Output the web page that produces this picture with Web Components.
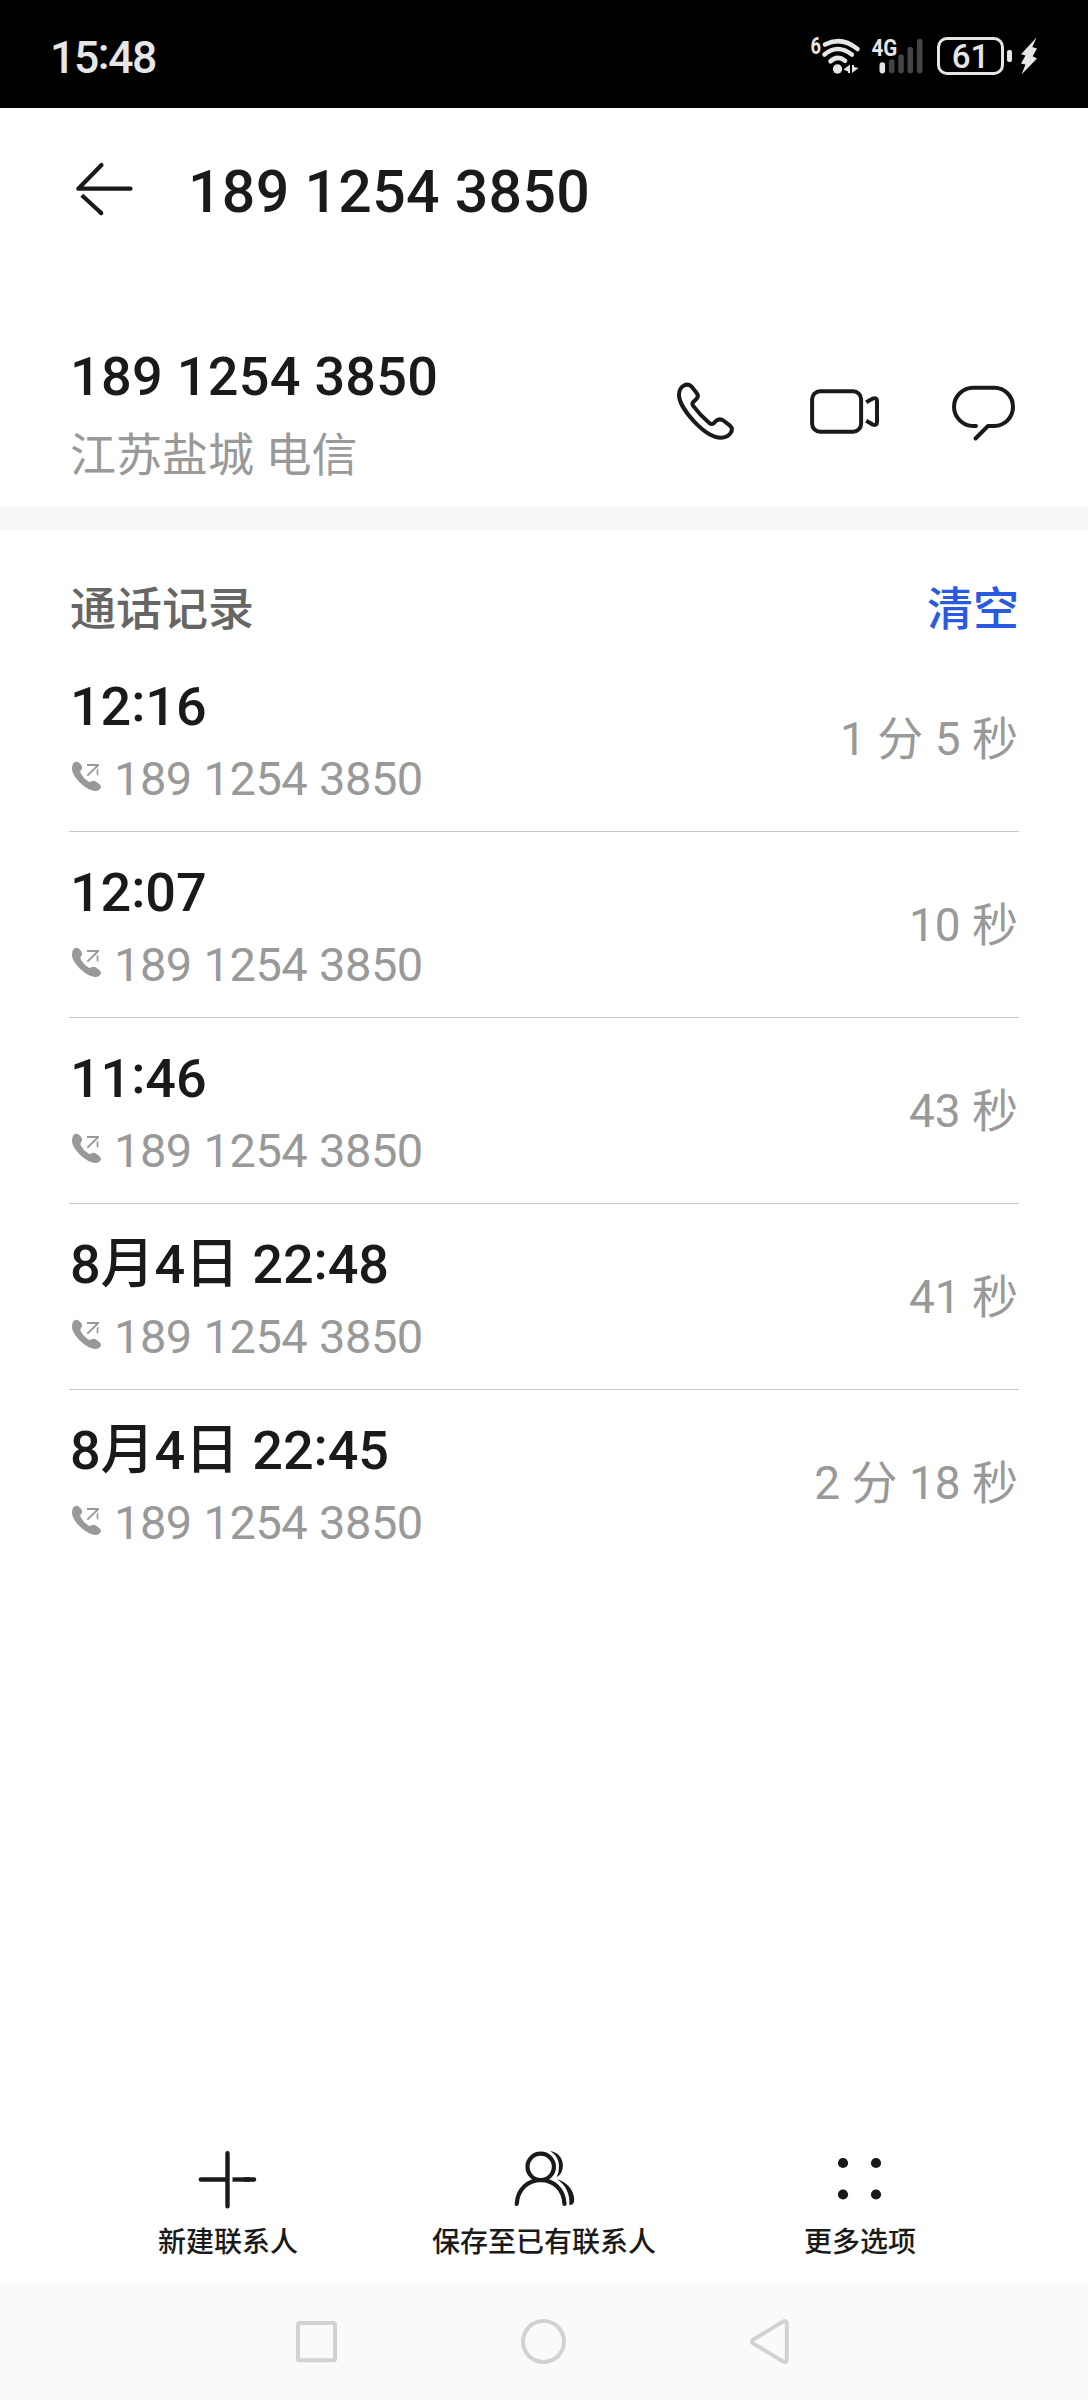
<!DOCTYPE html>
<html lang="zh-CN">
<head>
<meta charset="utf-8">
<title>通话记录</title>
<style>
body{margin:0;background:#fff;font-family:Roboto,"Noto Sans CJK SC",sans-serif;color:#1a1a1a}
</style>
</head>
<body>
<contact-page></contact-page>
<script>
const define=(name,css,html)=>customElements.define(name,class extends HTMLElement{
  constructor(){super();this.attachShadow({mode:'open'}).innerHTML=`<style>*{box-sizing:border-box}svg{display:block;flex:none}${css}</style>${html}`;}
});

const ICONS={
  back:['70 156 66 66',66,66,'<g fill="none" stroke="#1a1a1a" stroke-width="4.2" stroke-linecap="round" stroke-linejoin="round"><path d="M101.5 165 78.3 188.7H130.5"/><path d="M81.8 195.2 101.5 213.3" stroke-linecap="butt"/><path d="M100 212 101.3 213.2"/></g>'],
  phone:['674 379 64 64',64,64,'<path transform="translate(640 350) scale(.33333)" fill="none" stroke="#1a1a1a" stroke-width="12" stroke-linejoin="round" d="M154 109Q143 100 131 107Q117 116 117 134C117 175 195 263 243 263Q262 262 271 250Q281 237 270 227L252 213Q240 204 229 212L222 219Q215 225 208 219Q180 196 159 167Q155 161 160 156L170 146Q177 138 170 129Z"/>'],
  video:['808 379 73 64',73,64,'<g fill="none" stroke="#1a1a1a" stroke-width="4"><rect x="812.1" y="391.2" width="49" height="40.6" rx="8"/><path d="M866.2 402.2 872.8 398.6Q877 397 877 401V422Q877 426 872.8 424.6L866.2 420.8"/></g>'],
  chat:['951 379 67 64',67,64,'<path fill="none" stroke="#1a1a1a" stroke-width="4" stroke-linecap="round" stroke-linejoin="round" d="M976 426H973C963 426 954 417.500 954 406.800S963 387.800 973 387.800H994.500C1004.500 387.800 1013 396 1013 406.800S1004.500 426 994.500 426H988L975.500 438.500"/>'],
  outgoing:['69 758 36 36',36,36,'<g transform="translate(40 560) scale(.33333)" fill="#999"><path d="M97 618C98 610 103 605 110 605C117 606 121 612 125 617Q128 623 124 629Q119 634 122 640Q130 655 144 664Q149 668 154 664Q162 659 170 666L178 672Q186 680 181 686Q174 695 161 692C135 688 96 650 96 626Z"/><path d="M141 612H177V617L144 649 140 645 168 618H141ZM175 625V648L170 644V631Z"/></g>'],
  plus:['196 2148 64 64',64,64,'<g stroke="#1a1a1a" stroke-width="4.4" stroke-linecap="round"><path d="M227.500 2153.200V2206.200M200.800 2179.500H227"/><path stroke-linecap="butt" d="M232.500 2179.500H250"/><path d="M245 2179.500H254"/></g>'],
  people:['512 2148 64 64',64,64,'<g fill="none" stroke="#1a1a1a" stroke-width="4.200" stroke-linecap="round"><circle cx="540.700" cy="2166.800" r="13.200"/><path d="M516.700 2204C517.500 2189 528 2180.100 540.700 2180.100S563.900 2189 564.500 2204"/></g><g fill="#1a1a1a"><path d="M550 2151.300C557 2151.500 562.900 2157.500 562.900 2165.500 562.900 2171 560.500 2175 556.600 2177Q559.200 2172 558.900 2165C558.600 2158.500 555 2154 550 2151.300Z"/><path d="M557 2179.300C567 2181.500 574.500 2191 574.200 2200Q574 2205.500 569.300 2204.800C570.200 2193.500 565.500 2185 557 2179.300Z"/></g>'],
  more:['828 2148 64 64',64,64,'<g fill="#1a1a1a"><circle cx="843" cy="2163" r="5.100"/><circle cx="876" cy="2163" r="5.100"/><circle cx="843" cy="2194.500" r="5.100"/><circle cx="876" cy="2194.500" r="5.100"/></g>'],
  recents:['286 2311 60 60',60,60,'<rect x="298" y="2323" width="37" height="37.300" rx="1.500" fill="none" stroke="#d2d2d2" stroke-width="4"/>'],
  home:['513 2311 60 60',60,60,'<circle cx="543.500" cy="2341.500" r="20.500" fill="none" stroke="#d2d2d2" stroke-width="4"/>'],
  previous:['740 2311 60 60',60,60,'<path d="M752.800 2339.800 783.500 2321.300Q786.800 2320.200 786.800 2323.500V2359.500Q786.800 2362.800 783.500 2361.700L752.800 2343.200Q751 2341.500 752.800 2339.800Z" fill="none" stroke="#d2d2d2" stroke-width="4"/>'],
  wifi:['810 32 52 46',52,46,'<g fill="none" stroke="#e6e6e6" stroke-width="4.600" stroke-linecap="round"><path d="M825 44.500Q841.500 36 857.500 49"/><path d="M824.500 54.500Q837.500 43.500 851.800 54.500"/><path d="M830.500 61.200Q837.500 54.800 845 60.800"/></g><circle cx="837.500" cy="69" r="4.700" fill="#e6e6e6"/><path fill="#e6e6e6" d="M850 64.500V73H848V71.500L843.500 69.500ZM852 73V65H854V67L858.500 68Z"/><text x="810.500" y="54" font-size="23" font-weight="700" fill="#e6e6e6" textLength="10.500" lengthAdjust="spacingAndGlyphs">6</text>'],
  signal:['870 32 56 46',56,46,'<g stroke-width="5.600" stroke-linecap="round" stroke="#444"><path stroke="#e6e6e6" d="M882.300 65V70.600"/><path d="M891.700 62V70.600M901 57V70.600M910.300 49.500V70.600M919.700 41.500V70.600"/></g><text x="871.500" y="55.700" font-size="23.500" font-weight="700" fill="#e6e6e6" stroke="#000" stroke-width="2" paint-order="stroke" textLength="25.800" lengthAdjust="spacingAndGlyphs">4G</text>'],
  bolt:['1018 32 20 46',20,46,'<path fill="#e6e6e6" d="M1035.700 37.300 1020 54.300 1024.500 55.500 1020 63.500 1024.500 64.500 1020.500 74.500 1036 58.500 1031.700 56.200 1036 48.500 1031.300 47Z"/>']
};
customElements.define('line-icon',class extends HTMLElement{
  constructor(){
    super();
    const [box,w,h,art]=ICONS[this.getAttribute('name')]||ICONS.back;
    this.attachShadow({mode:'open'}).innerHTML=`<style>:host{display:block;flex:none}svg{display:block}</style><svg width="${w}" height="${h}" viewBox="${box}">${art}</svg>`;
  }
});

define('status-bar',`
:host{display:flex;height:108px;background:#000;color:#e6e6e6;padding:0 50px 0 50px;justify-content:space-between}
.time{font-size:44.5px;font-weight:500;line-height:116px;letter-spacing:-1.4px}
.time i{font-style:normal;line-height:0;vertical-align:4px}
.icons{display:flex;padding-top:32px}
line-icon+line-icon{margin-left:8px}
.bat{width:67px;height:38px;margin:5px 0 0 11px;border:3px solid #e6e6e6;border-radius:10px;font-size:33px;font-weight:500;line-height:34px;text-align:center}
.nub{width:5px;height:12px;margin:18px 7px 0 3px;border-radius:2px;background:#e6e6e6}
`,`<div class="time">15<i>:</i>48</div><div class="icons"><line-icon name="wifi"></line-icon><line-icon name="signal"></line-icon><div class="bat">61</div><div class="nub"></div><line-icon name="bolt" style="margin-right:-1px"></line-icon></div>`);

define('title-bar',`
:host{display:flex;height:166px;align-items:center;padding-left:70px;gap:52px;font-size:59px;font-weight:500;letter-spacing:.3px}
line-icon{margin-bottom:4px}
`,`<line-icon name="back"></line-icon><span><slot></slot></span>`);

define('contact-info',`
:host{display:flex;height:256px;padding:66px 70px 0;border-bottom:23px solid #f7f7f7;justify-content:space-between}
.name{padding-top:1px;font-size:54px;font-weight:500;line-height:72px;letter-spacing:.3px}
.place{margin-top:12px;font-size:46px;line-height:60px;color:#999}
.acts{display:flex;gap:70px;padding-top:39px}
`,`<div><div class="name"><slot name="name"></slot></div><div class="place"><slot name="place"></slot></div></div><div class="acts"><line-icon name="phone"></line-icon><line-icon name="video"></line-icon><line-icon name="chat"></line-icon></div>`);

define('section-head',`
:host{display:flex;height:116px;padding:49px 69px 0 70px;justify-content:space-between;font-size:46px;font-weight:500;line-height:60px;color:#666}
.clear{color:#2a5ae0}
`,`<slot></slot><span class="clear"><slot name="action"></slot></span>`);

customElements.define('call-row',class extends HTMLElement{
  constructor(){
    super();
    const time=this.getAttribute('time').replace(':','<i>:</i>');
    this.attachShadow({mode:'open'}).innerHTML=`<style>
*{box-sizing:border-box}
:host{display:flex;box-sizing:border-box;height:186px;margin:0 69px;padding:24px 1px 0;border-bottom:1px solid #c8c8c8;justify-content:space-between}
:host([last]){border-bottom-color:transparent}
.time{padding-top:1px;font-size:54px;font-weight:500;line-height:72px;letter-spacing:-.1px}
i{font-style:normal;line-height:0;vertical-align:4.5px}
.num{display:flex;margin-top:5px;font-size:47px;line-height:62px;letter-spacing:-.5px;word-spacing:.7px;color:#999}
line-icon{margin:10px 9px 0 -1px}
.dur{font-size:46px;line-height:139px;color:#999}
</style><div><div class="time">${time}</div><div class="num"><line-icon name="outgoing"></line-icon><span>${this.getAttribute('number')}</span></div></div><div class="dur"><slot></slot></div>`;
  }
});

define('action-item',`
:host{display:flex;flex:1;flex-direction:column;align-items:center;font-size:28px;font-weight:500;line-height:34px;gap:14px}
`,`<slot name="icon"></slot><span><slot></slot></span>`);

define('action-bar',`:host{display:flex;padding:0 70px 23px}`,`<slot></slot>`);

define('nav-bar',`:host{display:flex;box-sizing:border-box;height:117px;padding:28px 288px 0 286px;background:#fafafa;justify-content:space-between}`,
`<line-icon name="recents"></line-icon><line-icon name="home"></line-icon><line-icon name="previous"></line-icon>`);

define('contact-page',`
:host{display:flex;flex-direction:column;width:1088px;height:2400px;background:#fff}
status-bar,title-bar,contact-info,section-head,action-bar,nav-bar{box-sizing:border-box;flex:none}
main{flex:1 0 auto}
`,`<status-bar></status-bar>
<title-bar>189 1254 3850</title-bar>
<contact-info><span slot="name">189 1254 3850</span><span slot="place">江苏盐城 电信</span></contact-info>
<section-head><span>通话记录</span><span slot="action">清空</span></section-head>
<main>
<call-row time="12:16" number="189 1254 3850">1 分 5 秒</call-row>
<call-row time="12:07" number="189 1254 3850">10 秒</call-row>
<call-row time="11:46" number="189 1254 3850">43 秒</call-row>
<call-row time="8月4日 22:48" number="189 1254 3850">41 秒</call-row>
<call-row time="8月4日 22:45" number="189 1254 3850" last>2 分 18 秒</call-row>
</main>
<action-bar>
<action-item><line-icon slot="icon" name="plus"></line-icon>新建联系人</action-item>
<action-item><line-icon slot="icon" name="people"></line-icon>保存至已有联系人</action-item>
<action-item><line-icon slot="icon" name="more"></line-icon>更多选项</action-item>
</action-bar>
<nav-bar></nav-bar>`);
</script>
</body>
</html>
